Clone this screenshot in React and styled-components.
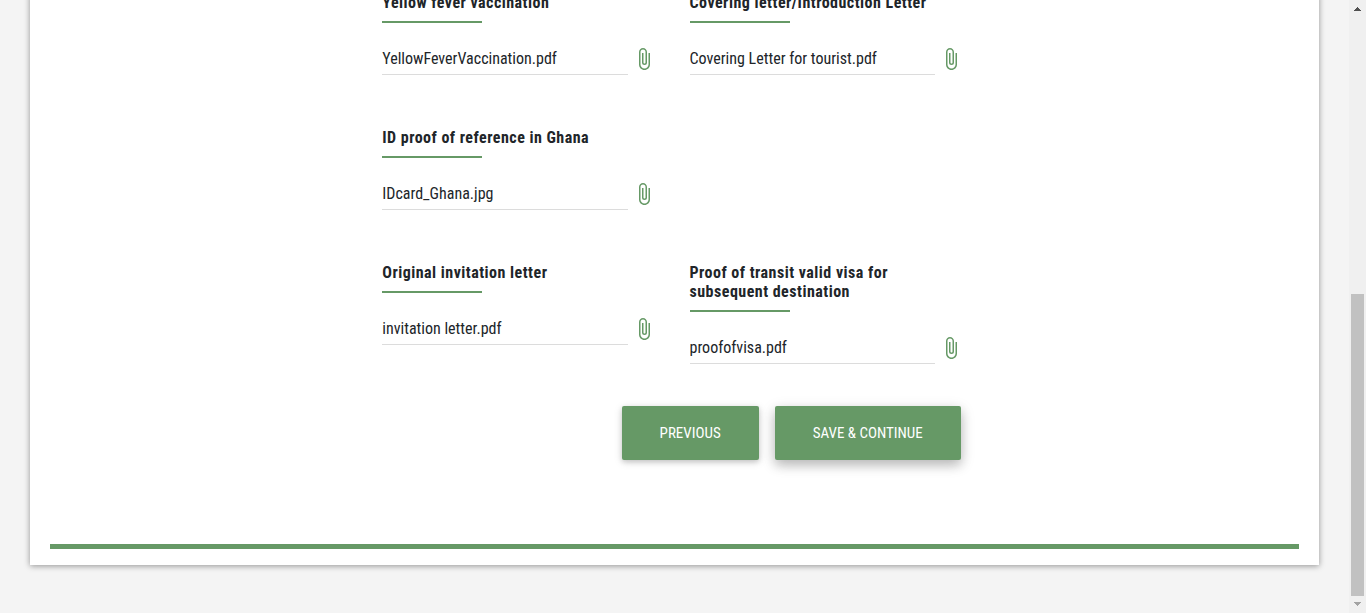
import React, { useId } from "react";
import styled, { createGlobalStyle } from "styled-components";

const GREEN = "#669966";
const FONT = '"Roboto Condensed", "Liberation Sans Narrow", Roboto, sans-serif';

const GlobalStyle = createGlobalStyle`
  *, *::before, *::after { box-sizing: border-box; }
  body {
    margin: 0;
    background: #f4f4f4;
    color: #212529;
    font-family: ${FONT};
    font-size: 16px;
  }
`;

const Shell = styled.div`
  display: flex;
  min-height: 100vh;
  overflow: hidden;
`;

const Page = styled.main`
  flex: 1;
  min-width: 0;
  padding: 0 30px 48px;
`;

const Card = styled.section`
  padding: 0 20px 16px;
  background: #fff;
  box-shadow: 0 1px 6px rgba(0, 0, 0, 0.4);
`;

const FormArea = styled.div`
  padding: 0 10px;
`;

const Form = styled.form`
  width: 50%;
  margin: -7px auto 84px;
`;

const Rows = styled.div`
  display: grid;
  grid-template-columns: 1fr 1fr;
  row-gap: 53px;
`;

const Cell = styled.div`
  grid-column: ${(p) => (p.$first ? 1 : "auto")};
  min-width: 0;
  padding: 0 15px;
`;

const Title = styled.label`
  display: block;
  font-weight: 700;
  line-height: 19px;
  letter-spacing: 0.03em;

  &::after {
    content: "";
    display: block;
    width: 100px;
    height: 2px;
    margin-top: 9px;
    background: ${GREEN};
  }
`;

const FileRow = styled.div`
  display: flex;
  align-items: center;
  margin-top: 20px;
`;

const FileInput = styled.input`
  flex: 1;
  min-width: 0;
  height: 32px;
  padding: 0;
  border: 0;
  border-bottom: 1px solid #dcdcdc;
  border-radius: 0;
  outline: 0;
  background: transparent;
  color: #212529;
  font: 400 16px/19px ${FONT};
`;

const AttachButton = styled.button`
  display: flex;
  width: 32px;
  padding: 0 0 0 4px;
  border: 0;
  background: none;
  color: ${GREEN};
  cursor: pointer;
`;

const Actions = styled.div`
  display: flex;
  justify-content: flex-end;
  gap: 16px;
  margin-top: 42px;
  padding-right: 21px;
`;

const ActionButton = styled.button`
  height: 54px;
  padding: 0 38px;
  border: 0;
  border-radius: 2px;
  background: ${GREEN};
  color: #fff;
  font: 400 15px/18px ${FONT};
  text-transform: uppercase;
  white-space: nowrap;
  cursor: pointer;
  box-shadow: ${(p) =>
    p.$raised
      ? "0 5px 11px rgba(0, 0, 0, 0.18), 0 4px 15px rgba(0, 0, 0, 0.15)"
      : "0 2px 5px rgba(0, 0, 0, 0.16), 0 2px 10px rgba(0, 0, 0, 0.12)"};
`;

const FooterBar = styled.div`
  height: 5px;
  background: ${GREEN};
`;

const Track = styled.div`
  display: flex;
  flex-direction: column;
  align-items: center;
  width: 17px;
  height: 100vh;
  background: #f0f0f0;
`;

const Arrow = styled.svg`
  flex: none;
  width: 17px;
  height: 17px;
  fill: ${(p) => p.$color};
`;

const Spacer = styled.div`
  flex: 277;
`;

const Thumb = styled.div`
  flex: 302;
  width: 13px;
  background: #c1c1c1;
`;

const documents = [
  { title: "Yellow fever vaccination", file: "YellowFeverVaccination.pdf" },
  { title: "Covering letter/Introduction Letter", file: "Covering Letter for tourist.pdf" },
  { title: "ID proof of reference in Ghana", file: "IDcard_Ghana.jpg" },
  { title: "Original invitation letter", file: "invitation letter.pdf", first: true },
  { title: "Proof of transit valid visa for subsequent destination", file: "proofofvisa.pdf" },
];

function DocumentField({ title, file, first }) {
  const id = useId();
  return (
    <Cell $first={first}>
      <Title htmlFor={id}>{title}</Title>
      <FileRow>
        <FileInput id={id} type="text" defaultValue={file} readOnly />
        <AttachButton type="button" aria-label={`Attach ${title}`}>
          <svg width="24" height="24" viewBox="0 0 24 24" fill="currentColor" aria-hidden="true">
            <path d="M16.5 6v11.5c0 2.21-1.79 4-4 4s-4-1.79-4-4V5a2.5 2.5 0 0 1 5 0v10.5c0 .55-.45 1-1 1s-1-.45-1-1V6H10v9.5a2.5 2.5 0 0 0 5 0V5c0-2.21-1.79-4-4-4S7 2.79 7 5v12.5c0 3.04 2.46 5.5 5.5 5.5s5.5-2.46 5.5-5.5V6h-1.5z" />
          </svg>
        </AttachButton>
      </FileRow>
    </Cell>
  );
}

export default function App() {
  return (
    <>
      <GlobalStyle />
      <Shell>
        <Page>
          <Card>
            <FormArea>
              <Form onSubmit={(e) => e.preventDefault()}>
                <Rows>
                  {documents.map((d) => (
                    <DocumentField key={d.title} {...d} />
                  ))}
                </Rows>
                <Actions>
                  <ActionButton type="button">Previous</ActionButton>
                  <ActionButton type="submit" $raised>Save &amp; Continue</ActionButton>
                </Actions>
              </Form>
            </FormArea>
            <FooterBar />
          </Card>
        </Page>
        <Track aria-hidden="true">
          <Arrow $color="#505050" viewBox="0 0 17 17">
            <path d="M8 7h1v1h1v1h1v1h1v1H5v-1h1V9h1V8h1z" />
          </Arrow>
          <Spacer />
          <Thumb />
          <Arrow $color="#a3a3a3" viewBox="0 0 17 17">
            <path d="M5 6h7v1h-1v1h-1v1H9v1H8V9H7V8H6V7H5z" />
          </Arrow>
        </Track>
      </Shell>
    </>
  );
}
